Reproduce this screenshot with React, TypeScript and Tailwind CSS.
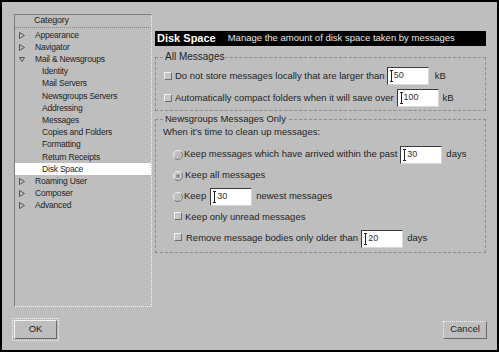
import React from 'react'

type Node = { label: string; level: 0 | 1; arrow?: 'right' | 'down'; selected?: boolean }

const tree: Node[] = [
  { label: 'Appearance', level: 0, arrow: 'right' },
  { label: 'Navigator', level: 0, arrow: 'right' },
  { label: 'Mail & Newsgroups', level: 0, arrow: 'down' },
  { label: 'Identity', level: 1 },
  { label: 'Mail Servers', level: 1 },
  { label: 'Newsgroups Servers', level: 1 },
  { label: 'Addressing', level: 1 },
  { label: 'Messages', level: 1 },
  { label: 'Copies and Folders', level: 1 },
  { label: 'Formatting', level: 1 },
  { label: 'Return Receipts', level: 1 },
  { label: 'Disk Space', level: 1, selected: true },
  { label: 'Roaming User', level: 0, arrow: 'right' },
  { label: 'Composer', level: 0, arrow: 'right' },
  { label: 'Advanced', level: 0, arrow: 'right' },
]

function Arrow({ dir }: { dir: 'right' | 'down' }) {
  return (
    <svg width="6" height="7" viewBox="0 0 6 7" className="shrink-0">
      {dir === 'right' ? (
        <path d="M0.5 0.5 L5.5 3.5 L0.5 6.5 Z" fill="none" stroke="#555" strokeWidth="1" />
      ) : (
        <path d="M0.5 1.5 L5.5 1.5 L3 5.5 Z" fill="none" stroke="#555" strokeWidth="1" />
      )}
    </svg>
  )
}

function Checkbox() {
  return (
    <span className="inline-block h-[8px] w-[8px] shrink-0 border border-t-[#f4f4f4] border-l-[#f4f4f4] border-r-[#6e6e6e] border-b-[#6e6e6e] bg-[#c4c4c4]" />
  )
}

function Radio({ on }: { on?: boolean }) {
  return (
    <svg width="10" height="10" viewBox="0 0 10 10" className="shrink-0">
      <path d="M8.2 1.8 A4.3 4.3 0 0 0 1.8 8.2" fill="none" stroke="#f0f0f0" strokeWidth="1" />
      <path d="M1.8 8.2 A4.3 4.3 0 0 0 8.2 1.8" fill="none" stroke="#7a7a7a" strokeWidth="1" />
      {on && <circle cx="5" cy="5" r="2.6" fill="#8c8c8c" stroke="#e8e8e8" strokeWidth="0.8" />}
    </svg>
  )
}

function Field({ value }: { value: string }) {
  return (
    <span className="flex h-[18px] w-[42px] shrink-0 items-center border border-t-[#3a3a3a] border-l-[#3a3a3a] border-r-[#d8d8d8] border-b-[#d8d8d8] bg-white pl-[2px] text-[9px] text-[#333]">
      <span className="flex h-[12px] w-[3px] flex-col items-center justify-between">
        <span className="h-px w-[3px] bg-[#222]" />
        <span className="w-px flex-1 bg-[#222]" />
        <span className="h-px w-[3px] bg-[#222]" />
      </span>
      <span className="ml-[1px]">{value}</span>
    </span>
  )
}

export default function App() {
  return (
    <div className="flex h-[352px] w-[499px] flex-col border-2 border-black bg-[#bebebe] font-['Liberation_Sans',Arial,sans-serif] text-[#1e1e1e]">
      <div className="flex pl-[12px] pr-[11px] pt-[12px]">
        {/* category tree */}
        <div className="h-[293px] w-[138px] border border-dotted border-[#f6f6f6] text-[8.5px] tracking-[-0.2px] [border-left-style:solid] [border-left-color:#7c7c7c] [border-top-style:solid] [border-top-color:#7c7c7c]">
          <div className="flex h-[13px] items-center border-b border-dotted border-[#8a8a8a] pl-[19px] text-[9px]">Category</div>
          <div className="pt-[1px]">
            {tree.map((n) => (
              <div
                key={n.label}
                className={`flex h-[12.2px] items-center ${n.selected ? 'bg-white' : ''} ${n.level === 1 ? 'pl-[27px]' : 'pl-[4px]'}`}>
                {n.arrow && <Arrow dir={n.arrow} />}
                <span className={n.arrow ? 'ml-[10px]' : ''}>{n.label}</span>
              </div>
            ))}
          </div>
        </div>

        {/* right panel */}
        <div className="ml-[3px] flex-1 pt-[17px] text-[9.5px]">
          <div className="flex h-[15px] items-center bg-black px-[2px] text-white">
            <span className="text-[11px] font-bold">Disk Space</span>
            <span className="ml-[12px] text-[#e8e8e8]">Manage the amount of disk space taken by messages</span>
          </div>

          <fieldset className="mt-[5px] border border-dashed border-[#8c8c8c] px-[8px] pb-[3px] pt-[4px]">
            <legend className="px-[1px] text-[10px] leading-[12px]">All Messages</legend>
            <div className="flex h-[18px] items-center">
              <Checkbox />
              <span className="ml-[3px]">Do not store messages locally that are larger than</span>
              <span className="ml-[2px]">
                <Field value="50" />
              </span>
              <span className="ml-[6px]">kB</span>
            </div>
            <div className="mt-[4px] flex h-[18px] items-center">
              <Checkbox />
              <span className="ml-[3px]">Automatically compact folders when it will save over</span>
              <span className="ml-[3px]">
                <Field value="100" />
              </span>
              <span className="ml-[4px]">kB</span>
            </div>
          </fieldset>

          <fieldset className="mt-[2px] border border-dashed border-[#8c8c8c] pb-[3px] pl-[7px] pr-[8px] pt-[2px]">
            <legend className="ml-[1px] px-[1px] leading-[12px]">Newsgroups Messages Only</legend>
            <div className="flex h-[11px] items-center">When it&apos;s time to clean up messages:</div>
            <div className="mt-[6px] pl-[10px]">
              <div className="flex h-[21px] items-center">
                <Radio />
                <span className="ml-[1px]">Keep messages which have arrived within the past</span>
                <span className="ml-[3px]">
                  <Field value="30" />
                </span>
                <span className="ml-[4px]">days</span>
              </div>
              <div className="flex h-[21px] items-center">
                <Radio on />
                <span className="ml-[2px]">Keep all messages</span>
              </div>
              <div className="flex h-[21px] items-center">
                <Radio />
                <span className="ml-[1px]">Keep</span>
                <span className="ml-[4px]">
                  <Field value="30" />
                </span>
                <span className="ml-[4px]">newest messages</span>
              </div>
              <div className="flex h-[21px] items-center">
                <span className="ml-[1px]">
                  <Checkbox />
                </span>
                <span className="ml-[3px]">Keep only unread messages</span>
              </div>
              <div className="flex h-[21px] items-center">
                <span className="ml-[1px]">
                  <Checkbox />
                </span>
                <span className="ml-[4px]">Remove message bodies only older than</span>
                <span className="ml-[3px]">
                  <Field value="20" />
                </span>
                <span className="ml-[4px]">days</span>
              </div>
            </div>
          </fieldset>
        </div>
      </div>

      {/* buttons */}
      <div className="mt-[11px] flex items-center justify-between pl-[10px] pr-[10px] text-[9.5px]">
        <div className="border border-dotted border-[#f2f2f2] p-[1px]">
          <button className="flex h-[19px] w-[43px] items-center justify-center border border-t-[#f2f2f2] border-l-[#f2f2f2] border-r-[#6a6a6a] border-b-[#6a6a6a] bg-[#bebebe]">
            OK
          </button>
        </div>
        <button className="flex h-[18px] w-[44px] items-center justify-center border border-dotted border-[#f2f2f2] bg-[#bebebe] [border-right-style:solid] [border-bottom-style:solid] [border-right-color:#6a6a6a] [border-bottom-color:#6a6a6a]">
          Cancel
        </button>
      </div>
    </div>
  )
}
